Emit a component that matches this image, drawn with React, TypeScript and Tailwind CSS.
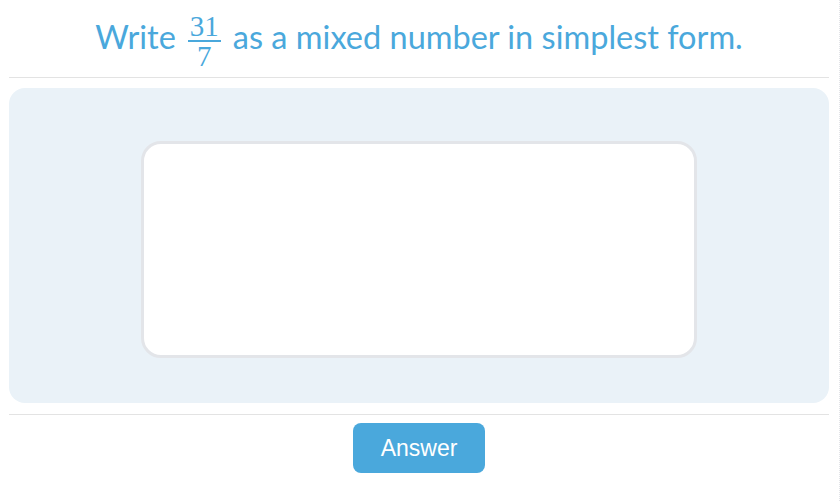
import React from 'react';

function Fraction({ num, den }: { num: string; den: string }) {
  return (
    <span
      className="mx-[12px] inline-flex flex-col items-center align-middle text-[29px] leading-[22px]"
      style={{ fontFamily: '"Liberation Serif", serif' }}
    >
      <span className="px-[2px]">{num}</span>
      <span className="my-[3px] h-[2px] w-full bg-[#4aa8dc]" />
      <span className="px-[2px]">{den}</span>
    </span>
  );
}

export default function App() {
  return (
    <div className="h-[501px] w-[840px] bg-white border-r border-dotted border-[#e2e4e8]">
      <div className="pl-[9px] pr-[10px]">
        <div className="flex h-[78px] items-center justify-center border-b border-[#e3e3e3] pt-[4px]">
          <h1
            className="text-[32.5px] leading-[40px] text-[#4aa8dc]"
            style={{ fontFamily: 'Lato, sans-serif' }}
          >
            Write
            <Fraction num="31" den="7" />
            as a mixed number in simplest form.
          </h1>
        </div>
        <div className="mt-[10px] flex h-[315px] justify-center rounded-[16px] bg-[#eaf2f8] pt-[53px]">
          <div className="h-[217px] w-[556px] rounded-[20px] border-[3px] border-[#e3e5e9] bg-white" />
        </div>
        <div className="mt-[11px] flex justify-center border-t border-[#e3e3e3] pt-[8px]">
          <button
            className="h-[50px] w-[132px] rounded-[8px] bg-[#4aa8dc] text-[23px] text-white"
            style={{ fontFamily: '"Liberation Sans", Arial, sans-serif' }}
          >
            Answer
          </button>
        </div>
      </div>
    </div>
  );
}
